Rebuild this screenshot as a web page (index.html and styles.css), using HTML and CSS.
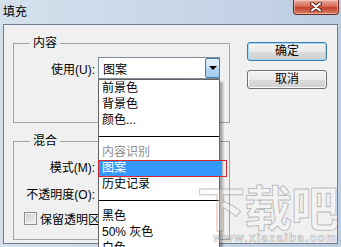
FILE: index.html
```html
<!DOCTYPE html>
<html lang="zh-CN">
<head>
    <meta charset="UTF-8">
    <meta name="viewport" content="width=device-width, initial-scale=1.0">
    <title>填充</title>
    <link rel="stylesheet" href="styles.css">
</head>
<body>
    <div class="window">
        <div class="titlebar">
            <span class="title">填充</span>
            <button class="close-btn">
                <svg width="12" height="10" viewBox="0 0 12 10">
                    <path d="M2 1.5 L10 8.5 M10 1.5 L2 8.5" stroke="#5a2019" stroke-width="4" stroke-linecap="round"/>
                    <path d="M2 1.5 L10 8.5 M10 1.5 L2 8.5" stroke="#ffffff" stroke-width="2" stroke-linecap="round"/>
                </svg>
            </button>
        </div>

        <div class="dialog">
            <div class="left-col">
                <fieldset class="group group-content">
                    <legend>内容</legend>
                    <div class="row">
                        <label class="row-label">使用(U):</label>
                        <div class="select">
                            <span class="select-value">图案</span>
                            <span class="select-arrow"></span>

                            <ul class="dropdown">
                                <li class="item">前景色</li>
                                <li class="item">背景色</li>
                                <li class="item">颜色...</li>
                                <li class="separator"></li>
                                <li class="item disabled">内容识别</li>
                                <li class="item selected">图案</li>
                                <li class="item">历史记录</li>
                                <li class="separator"></li>
                                <li class="item">黑色</li>
                                <li class="item">50% 灰色</li>
                                <li class="item">白色</li>
                            </ul>
                        </div>
                    </div>
                </fieldset>

                <fieldset class="group group-blend">
                    <legend>混合</legend>
                    <div class="row">
                        <label class="row-label">模式(M):</label>
                        <div class="select">
                            <span class="select-value">正常</span>
                            <span class="select-arrow"></span>
                        </div>
                    </div>
                    <div class="row row-opacity">
                        <label class="row-label">不透明度(O):</label>
                        <input class="text-input" type="text" value="100">
                        <span class="unit">%</span>
                    </div>
                    <div class="check-row">
                        <span class="checkbox"></span>
                        <span class="check-label">保留透明区域(P)</span>
                    </div>
                </fieldset>
            </div>

            <div class="right-col">
                <button class="btn btn-default">确定</button>
                <button class="btn">取消</button>
            </div>
        </div>

        <div class="watermark">
            <span class="wm-big">下载吧</span>
            <span class="wm-small">www.xiazaiba.com</span>
        </div>
    </div>
</body>
</html>
```

FILE: styles.css
```css
* {
    margin: 0;
    padding: 0;
    box-sizing: border-box;
}

body {
    width: 341px;
    height: 247px;
    overflow: hidden;
    font-family: "Liberation Sans", "Noto Sans CJK SC", sans-serif;
    font-size: 12px;
    color: #000;
    background: linear-gradient(to right, #d5e0ed, #bccde1);
}

.window {
    position: relative;
    height: 247px;
    display: flex;
    flex-direction: column;
    padding: 0 3px 3px 3px;
}

.titlebar {
    height: 24px;
    display: flex;
    align-items: center;
    flex: none;
}

.title {
    line-height: 16px;
    color: #000;
}

.close-btn {
    align-self: flex-start;
    margin-left: auto;
    margin-right: -1px;
    width: 46px;
    height: 15px;
    border: 1px solid #6b2a22;
    border-top: none;
    border-radius: 0 0 4px 4px;
    background: linear-gradient(#eab0a3, #d86a54 45%, #c2412a 55%, #d9826a);
    box-shadow: inset 0 0 0 1px rgba(255, 220, 210, 0.5);
    display: flex;
    justify-content: center;
    align-items: center;
}

/* dialog body */
.dialog {
    flex: 1;
    display: flex;
    gap: 17px;
    padding: 10px 10px 0 9px;
    background-color: #f0f0f0;
    border: 1px solid #6f7e8e;
}

.left-col {
    width: 217px;
    flex: none;
}

.group {
    border: 1px solid #a3a3a3;
    padding: 0 6px 0 6px;
    min-inline-size: 0;
}

.group legend {
    margin-left: 10px;
    padding: 0 3px;
    line-height: 16px;
}

.group-content {
    padding-bottom: 43px;
}

.group-blend {
    margin-top: 10px;
    padding-bottom: 13px;
}

.row {
    display: flex;
    align-items: center;
    height: 22px;
    margin-top: 6px;
}

.row-opacity {
    margin-top: 5px;
}

.row-label {
    width: 75px;
    margin-right: 3px;
    text-align: right;
    flex: none;
}

.select {
    position: relative;
    width: 122px;
    height: 22px;
    display: flex;
    align-items: center;
    background: #fff;
    border: 1px solid #7f8b99;
}

.select-value {
    flex: 1;
    padding-left: 4px;
}

.select-arrow {
    width: 15px;
    height: 100%;
    margin-right: -1px;
    border: 1px solid #3d7bad;
    border-radius: 2px;
    background: linear-gradient(#e3f1fc, #cfe6f8 50%, #b3d6f2 50%, #a6cdee);
    display: flex;
    justify-content: center;
    align-items: center;
}

.select-arrow::before {
    content: "";
    border-left: 4px solid transparent;
    border-right: 4px solid transparent;
    border-top: 4px solid #000;
}

.dropdown {
    position: absolute;
    z-index: 10;
    left: -1px;
    top: calc(100% + 1px);
    width: 122px;
    list-style: none;
    background: #fff;
    border: 1px solid #646464;
    box-shadow: 3px 3px 2px rgba(0, 0, 0, 0.3);
}

.item {
    height: 16px;
    line-height: 16px;
    padding-left: 3px;
    white-space: nowrap;
}

.item.disabled {
    color: #8d8d8d;
}

.item.selected {
    position: relative;
    margin-right: -3px;
    background-color: #3399ff;
    color: #fff;
}

.item.selected::after {
    content: "";
    position: absolute;
    left: -1px;
    right: -5px;
    top: 0;
    bottom: -1px;
    border: 1px solid #d8262e;
}

.separator {
    height: 1px;
    margin: 8px 0 7px;
    background-color: #000;
}

.text-input {
    width: 50px;
    height: 22px;
    border: 1px solid #7f8b99;
    font: inherit;
    padding-left: 3px;
}

.unit {
    margin-left: 4px;
}

.check-row {
    display: flex;
    align-items: center;
    height: 16px;
    margin-top: 6px;
    padding-left: 4px;
    white-space: nowrap;
}

.checkbox {
    width: 13px;
    height: 13px;
    flex: none;
    border: 1px solid #8e8f8f;
    background: linear-gradient(135deg, #cbcbcb, #f6f6f6);
    box-shadow: inset 0 0 0 1px #f4f4f4;
}

.check-label {
    margin-left: 3px;
}

/* buttons */
.right-col {
    width: 80px;
    flex: none;
    display: flex;
    flex-direction: column;
    gap: 9px;
    padding-top: 7px;
}

.btn {
    width: 80px;
    height: 19px;
    font: inherit;
    line-height: 17px;
    border: 1px solid #707070;
    border-radius: 3px;
    background: linear-gradient(#f2f2f2, #ebebeb 50%, #dddddd 50%, #cfcfcf);
    box-shadow: inset 0 0 0 1px #fbfbfb;
}

.btn-default {
    border-color: #3c7fb1;
    box-shadow: inset 0 0 0 1px #9fd8f5;
}

/* watermark */
.watermark {
    position: absolute;
    z-index: 20;
    right: 3px;
    top: 178px;
    display: flex;
    flex-direction: column;
    align-items: flex-end;
    pointer-events: none;
}

.wm-big {
    font-family: "Noto Sans CJK SC", sans-serif;
    font-size: 48px;
    font-weight: 700;
    line-height: 54px;
    letter-spacing: -1px;
    color: rgba(255, 255, 255, 0.25);
    -webkit-text-stroke: 1px rgba(120, 120, 120, 0.45);
}

.wm-small {
    font-size: 12px;
    font-weight: 700;
    line-height: 12px;
    letter-spacing: 1.2px;
    color: rgba(255, 255, 255, 0.25);
    -webkit-text-stroke: 0.6px rgba(120, 120, 120, 0.5);
}
```
